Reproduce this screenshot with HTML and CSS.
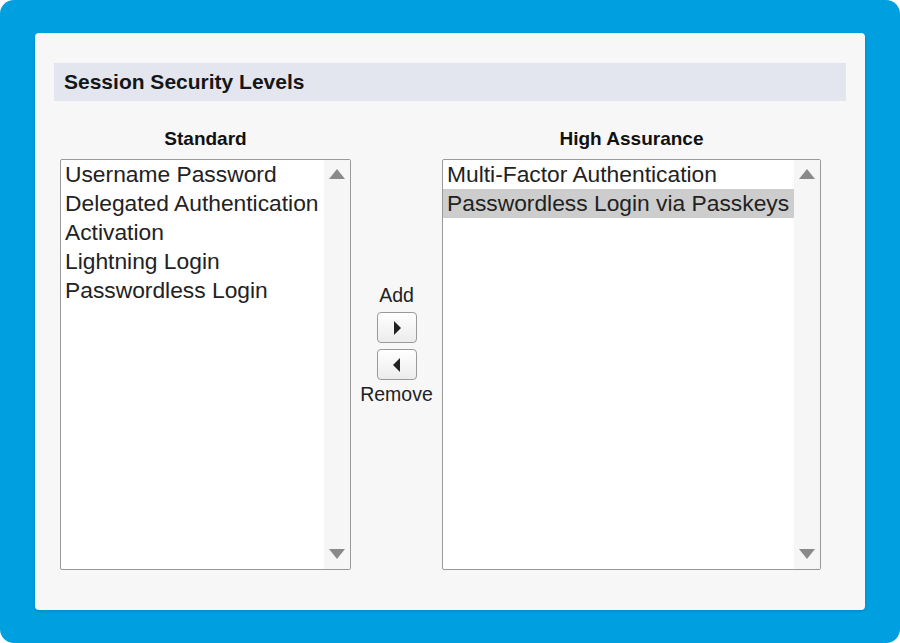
FILE: index.html
```
<!DOCTYPE html>
<html lang="en">
<head>
    <meta charset="UTF-8">
    <meta name="viewport" content="width=device-width, initial-scale=1.0">
    <title>Session Security Levels</title>
    <link rel="stylesheet" href="styles.css">
</head>
<body>
    <div class="frame">
        <div class="card">
            <h2 class="section-title">Session Security Levels</h2>

            <div class="duel">
                <div class="column column-left">
                    <div class="column-label">Standard</div>
                    <div class="listbox">
                        <div class="options">
                            <div class="option">Username Password</div>
                            <div class="option">Delegated Authentication</div>
                            <div class="option">Activation</div>
                            <div class="option">Lightning Login</div>
                            <div class="option">Passwordless Login</div>
                        </div>
                        <div class="scrollbar">
                            <span class="arrow arrow-up"></span>
                            <span class="arrow arrow-down"></span>
                        </div>
                    </div>
                </div>

                <div class="mover">
                    <div class="mover-label">Add</div>
                    <button class="mover-button" title="Add">
                        <svg width="10" height="16" viewBox="0 0 10 16"><path d="M2 1 L9 8 L2 15 Z" fill="#222"/></svg>
                    </button>
                    <button class="mover-button" title="Remove">
                        <svg width="10" height="16" viewBox="0 0 10 16"><path d="M8 1 L1 8 L8 15 Z" fill="#222"/></svg>
                    </button>
                    <div class="mover-label">Remove</div>
                </div>

                <div class="column column-right">
                    <div class="column-label">High Assurance</div>
                    <div class="listbox">
                        <div class="options">
                            <div class="option">Multi-Factor Authentication</div>
                            <div class="option selected">Passwordless Login via Passkeys</div>
                        </div>
                        <div class="scrollbar">
                            <span class="arrow arrow-up"></span>
                            <span class="arrow arrow-down"></span>
                        </div>
                    </div>
                </div>
            </div>
        </div>
    </div>
</body>
</html>
```

FILE: styles.css
```
* {
    box-sizing: border-box;
}
body {
    margin: 0;
    background: #ffffff;
    font-family: "Liberation Sans", Arial, sans-serif;
}
.frame {
    height: 643px;
    background: #009fdf;
    border-radius: 14px;
    padding: 33px 35px;
}
.card {
    height: 577px;
    background: #f7f7f7;
    border-radius: 4px;
    padding: 30px 19px;
    box-shadow: 0 1px 3px rgba(0,0,0,0.15);
}
.section-title {
    margin: 0;
    height: 38px;
    line-height: 38px;
    padding-left: 10px;
    background: #e3e6ee;
    font-size: 21px;
    font-weight: bold;
    color: #161616;
}
.duel {
    display: flex;
    padding-left: 6px;
    margin-top: 27px;
}
.column {
    display: flex;
    flex-direction: column;
}
.column-left {
    width: 291px;
}
.column-right {
    width: 379px;
}
.column-label {
    text-align: center;
    font-size: 19px;
    font-weight: bold;
    color: #111;
    height: 20px;
    line-height: 22px;
    margin-bottom: 11px;
}
.listbox {
    display: flex;
    height: 411px;
    background: #ffffff;
    border: 1px solid #999999;
    border-radius: 2px;
}
.options {
    flex: 1;
}
.option {
    height: 29px;
    line-height: 28px;
    padding-left: 4px;
    font-size: 22.8px;
    color: #222;
    white-space: nowrap;
}
.option.selected {
    background: #cdcdcd;
}
.scrollbar {
    width: 26px;
    background: #f6f6f6;
    display: flex;
    flex-direction: column;
    justify-content: space-between;
    align-items: center;
    padding: 9px 0 10px;
}
.arrow {
    width: 0;
    height: 0;
    border-left: 8px solid transparent;
    border-right: 8px solid transparent;
}
.arrow-up {
    border-bottom: 10px solid #8a8a8a;
}
.arrow-down {
    border-top: 10px solid #8a8a8a;
}
.mover {
    width: 91px;
    display: flex;
    flex-direction: column;
    align-items: center;
    padding-top: 157px;
}
.mover-label {
    font-size: 19.5px;
    color: #222;
    height: 20px;
    line-height: 20px;
}
.mover-button {
    width: 40px;
    height: 31px;
    margin-top: 7px;
    border: 1px solid #9a9a9a;
    border-radius: 4px;
    background: linear-gradient(#ffffff, #ececec);
    display: flex;
    align-items: center;
    justify-content: center;
    padding: 0;
}
.mover-button + .mover-label {
    margin-top: 4px;
}
.mover-button + .mover-button {
    margin-top: 6px;
}
```
